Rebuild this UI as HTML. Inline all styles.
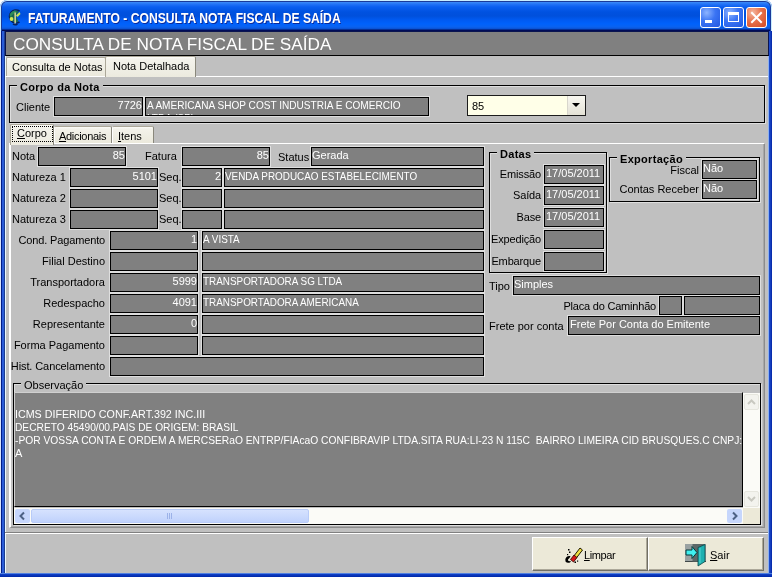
<!DOCTYPE html><html><head><meta charset="utf-8"><style>
*{margin:0;padding:0;box-sizing:border-box}
html,body{width:772px;height:577px;overflow:hidden;background:#fff}
body{position:relative;will-change:transform;font-family:"Liberation Sans",sans-serif;font-size:11px;color:#000}
.a{position:absolute}
.f{position:absolute;background:#808080;border:1px solid #000;height:19px;color:#fff;line-height:14px;padding:0 0 0 1px;white-space:nowrap;overflow:hidden;box-shadow:0 0 0 1px #dedede}
.r{text-align:right;padding:0 0 0 0}
.c span{display:inline-block;transform:scaleX(0.9);transform-origin:0 0}
.m span{display:block;transform-origin:0 0}
.l{position:absolute;white-space:nowrap;line-height:13px;letter-spacing:0}
.lr{text-align:right}
.gb{position:absolute;border:1px solid #000;box-shadow:1px 1px 0 #dedede,inset 1px 1px 0 #dedede}
.gl{position:absolute;background:#c0c0c0;padding:0 3px;font-weight:bold;line-height:13px;white-space:nowrap;letter-spacing:0.3px}
.tab{position:absolute;background:linear-gradient(#fdfdfb 0,#f3f2ea 2px,#ebe9dc 100%);border:1px solid #aca899;border-bottom:none;border-radius:2px 2px 0 0}
</style></head><body>
<div class="a" style="left:0px;top:0px;width:772px;height:577px;background:#0842d8;border-radius:7px 7px 0 0"></div>
<div class="a" style="left:0px;top:0px;width:772px;height:31px;border-radius:7px 7px 0 0;background:#c8ecff"></div>
<div class="a" style="left:1px;top:1px;width:770px;height:30px;border-radius:6px 6px 0 0;background:#1a3a9a"></div>
<div class="a" style="left:2px;top:2px;width:768px;height:29px;border-radius:5px 5px 0 0;background:linear-gradient(#3c8cf8 0,#2474f6 2px,#0a5ef0 5px,#0052e0 10px,#0050dc 14px,#005af2 18px,#0062fc 22px,#0a62f0 25px,#0a50d0 27px,#001060 28px,#000850 29px)"></div>
<div class="a" style="left:0px;top:31px;width:5px;height:546px;background:linear-gradient(90deg,#d8e4fc 0,#d8e4fc 1px,#001c88 1px,#001c88 2px,#2a5cd8 2px,#2a5cd8 4px,#1c3c90 4px)"></div>
<div class="a" style="left:768px;top:31px;width:4px;height:546px;background:linear-gradient(90deg,#8cb0f0 0,#8cb0f0 1px,#2050d0 1px,#1038b8 3px,#0020a0 4px)"></div>
<div class="a" style="left:0px;top:573px;width:772px;height:4px;background:linear-gradient(#5080e0 0,#5080e0 1px,#1040c8 1px,#0028a8 4px)"></div>
<div class="a" style="left:5px;top:31px;width:763px;height:542px;background:#c0c0c0"></div>
<div class="a" style="left:5px;top:56px;width:1px;height:517px;background:#e8f8ff"></div>
<div class="a" style="left:28px;top:10px;color:#fff;font-weight:bold;font-size:14px;line-height:16px;white-space:nowrap;text-shadow:1px 1px 0 #0a2a9c;transform:scaleX(0.867);transform-origin:0 0">FATURAMENTO - CONSULTA NOTA FISCAL DE SAÍDA</div>
<div class="a" style="left:700px;top:7px;width:21px;height:21px;border:1px solid #fff;border-radius:3px;background:radial-gradient(circle at 30% 25%,#8cb4ff 0,#3a74f4 45%,#2258e0 100%)"></div>
<div class="a" style="left:723px;top:7px;width:21px;height:21px;border:1px solid #fff;border-radius:3px;background:radial-gradient(circle at 30% 25%,#8cb4ff 0,#3a74f4 45%,#2258e0 100%)"></div>
<div class="a" style="left:746px;top:7px;width:21px;height:21px;border:1px solid #fff;border-radius:3px;background:radial-gradient(circle at 30% 25%,#f4b8a0 0,#e8704a 45%,#d04a24 100%)"></div>
<div class="a" style="left:705px;top:20px;width:7px;height:3px;background:#fff"></div>
<div class="a" style="left:728px;top:12px;width:11px;height:10px;border:1px solid #fff;border-top-width:3px"></div>
<svg class="a" style="left:746px;top:7px" width="21" height="21"><path d="M6 6 L15 15 M15 6 L6 15" stroke="#fff" stroke-width="2" stroke-linecap="square"/></svg>
<svg class="a" style="left:0px;top:0px" width="30" height="30" viewBox="0 0 30 30">
<path d="M19.5 11 A6.5 6.5 0 1 0 19.5 22" fill="none" stroke="#08205a" stroke-width="1.6"/>
<path d="M18.8 11.5 A5.8 5.8 0 1 0 18.5 21.5 L16 16 Z" fill="#1a6650"/>
<path d="M9.5 15 Q11 11 15 10.5 L17 12.5 Q12.5 13 11 17 Z" fill="#2e8c58"/>
<circle cx="11.5" cy="19" r="1.9" fill="#d0e858"/>
<path d="M16 15.5 L19.5 12 L20.5 14 L17.5 17 Z" fill="#c8e850"/>
<rect x="14.5" y="12.5" width="1.3" height="11" fill="#f4e8a8"/>
<path d="M13 24 Q15 25.5 17.5 24" stroke="#08205a" stroke-width="1.5" fill="none"/>
</svg>
<div class="a" style="left:5px;top:31px;width:764px;height:25px;background:#808080;border:1px solid #0a1450;border-bottom-color:#000"></div>
<div class="a" style="left:13px;top:34px;color:#fff;font-size:17.2px;line-height:20px;white-space:nowrap">CONSULTA DE NOTA FISCAL DE SAÍDA</div>
<div class="a" style="left:5px;top:76px;width:763px;height:1px;background:#fff"></div>
<div class="tab" style="left:6px;top:57px;width:100px;height:19px"></div>
<div class="l" style="left:12px;top:61px;">Consulta de Notas</div>
<div class="tab" style="left:105px;top:56px;width:91px;height:21px;background:linear-gradient(#fdfdfb 0,#f4f3ec 2px,#eceadf 100%);border-right-color:#8a887c"></div>
<div class="l" style="left:113px;top:60px;">Nota Detalhada</div>
<div class="gb" style="left:9px;top:85px;width:756px;height:38px"></div>
<div class="gl" style="left:17px;top:81px">Corpo da Nota</div>
<div class="l" style="left:16px;top:101px;">Cliente</div>
<div class="f r" style="left:54px;top:97px;width:89px;height:19px;">7726</div>
<div class="f m" style="left:145px;top:97px;width:284px;height:19px;line-height:12.5px;padding-top:1px"><span style="transform:scaleX(0.915)">A AMERICANA SHOP COST INDUSTRIA E COMERCIO</span><span style="transform:scaleX(0.915)">LTDA (SP)</span></div>
<div class="a" style="left:467px;top:95px;width:119px;height:21px;background:#ffffe8;border:1px solid #1c1c1c"></div>
<div class="l" style="left:472px;top:98px;line-height:16px">85</div>
<div class="a" style="left:567px;top:96px;width:18px;height:19px;background:linear-gradient(#f8f7f0,#e4e2d6);border-left:1px solid #d8d6cc"></div>
<svg class="a" style="left:571px;top:102px" width="10" height="6"><path d="M1 1 L9 1 L5 5 Z" fill="#000"/></svg>
<div class="a" style="left:9px;top:143px;width:756px;height:385px;border-left:2px solid #fff;border-top:1px solid #fff;border-right:1px solid #8c8c8c;border-bottom:1px solid #8c8c8c;box-shadow:inset -1px -1px 0 #a8a8a8"></div>
<div class="tab" style="left:10px;top:124px;width:44px;height:21px;background:linear-gradient(#fdfdfb 0,#f4f3ec 2px,#eceadf 100%);border-right-color:#8a887c"></div>
<div class="a" style="left:12px;top:126px;width:41px;height:16px;border:1px dotted #000"></div>
<div class="l" style="left:17px;top:127px;"><u>C</u>orpo</div>
<div class="tab" style="left:54px;top:126px;width:58px;height:17px;border-right-color:#8a887c;border-left-color:#fff"></div>
<div class="l" style="left:59px;top:130px;letter-spacing:-0.3px"><u>A</u>dicionais</div>
<div class="tab" style="left:112px;top:126px;width:42px;height:17px;border-right-color:#8a887c;border-left-color:#fff"></div>
<div class="l" style="left:118px;top:130px;"><u>I</u>tens</div>
<div class="l" style="left:12px;top:150px;">Nota</div>
<div class="f r" style="left:38px;top:147px;width:88px;height:19px;">85</div>
<div class="l" style="left:145px;top:150px;">Fatura</div>
<div class="f r" style="left:182px;top:147px;width:88px;height:19px;">85</div>
<div class="l" style="left:278px;top:151px;">Status</div>
<div class="f" style="left:311px;top:147px;width:173px;height:19px;padding-left:0">Gerada</div>
<div class="l" style="left:12px;top:171px;">Natureza 1</div>
<div class="f r" style="left:70px;top:168px;width:88px;height:19px;">5101</div>
<div class="l" style="left:159px;top:171px;">Seq.</div>
<div class="f r" style="left:182px;top:168px;width:40px;height:19px;">2</div>
<div class="f c" style="left:224px;top:168px;width:260px;height:19px;padding-left:0"><span>VENDA PRODUCAO ESTABELECIMENTO</span></div>
<div class="l" style="left:12px;top:192px;">Natureza 2</div>
<div class="f r" style="left:70px;top:189px;width:88px;height:19px;"></div>
<div class="l" style="left:159px;top:192px;">Seq.</div>
<div class="f r" style="left:182px;top:189px;width:40px;height:19px;"></div>
<div class="f c" style="left:224px;top:189px;width:260px;height:19px;padding-left:0"></div>
<div class="l" style="left:12px;top:213px;">Natureza 3</div>
<div class="f r" style="left:70px;top:210px;width:88px;height:19px;"></div>
<div class="l" style="left:159px;top:213px;">Seq.</div>
<div class="f r" style="left:182px;top:210px;width:40px;height:19px;"></div>
<div class="f c" style="left:224px;top:210px;width:260px;height:19px;padding-left:0"></div>
<div class="l lr" style="left:-95px;width:200px;top:234px;letter-spacing:-0.15px">Cond. Pagamento</div>
<div class="f r" style="left:110px;top:231px;width:88px;height:19px;">1</div>
<div class="f c" style="left:202px;top:231px;width:282px;height:19px;padding-left:0"><span>A VISTA</span></div>
<div class="l lr" style="left:-95px;width:200px;top:255px;">Filial Destino</div>
<div class="f r" style="left:110px;top:252px;width:88px;height:19px;"></div>
<div class="f c" style="left:202px;top:252px;width:282px;height:19px;padding-left:0"></div>
<div class="l lr" style="left:-95px;width:200px;top:276px;">Transportadora</div>
<div class="f r" style="left:110px;top:273px;width:88px;height:19px;">5999</div>
<div class="f c" style="left:202px;top:273px;width:282px;height:19px;padding-left:0"><span>TRANSPORTADORA SG LTDA</span></div>
<div class="l lr" style="left:-95px;width:200px;top:297px;">Redespacho</div>
<div class="f r" style="left:110px;top:294px;width:88px;height:19px;">4091</div>
<div class="f c" style="left:202px;top:294px;width:282px;height:19px;padding-left:0"><span>TRANSPORTADORA AMERICANA</span></div>
<div class="l lr" style="left:-95px;width:200px;top:318px;">Representante</div>
<div class="f r" style="left:110px;top:315px;width:88px;height:19px;">0</div>
<div class="f c" style="left:202px;top:315px;width:282px;height:19px;padding-left:0"></div>
<div class="l lr" style="left:-95px;width:200px;top:339px;">Forma Pagamento</div>
<div class="f r" style="left:110px;top:336px;width:88px;height:19px;"></div>
<div class="f c" style="left:202px;top:336px;width:282px;height:19px;padding-left:0"></div>
<div class="l lr" style="left:-95px;width:200px;top:360px;letter-spacing:-0.1px">Hist. Cancelamento</div>
<div class="f" style="left:110px;top:357px;width:374px;height:19px;"></div>
<div class="gb" style="left:489px;top:152px;width:118px;height:121px"></div>
<div class="gl" style="left:497px;top:148px">Datas</div>
<div class="l lr" style="left:341px;width:200px;top:168px;letter-spacing:-0.15px">Emissão</div>
<div class="f" style="left:544px;top:165px;width:60px;height:19px;">17/05/2011</div>
<div class="l lr" style="left:341px;width:200px;top:189px;letter-spacing:-0.15px">Saída</div>
<div class="f" style="left:544px;top:186px;width:60px;height:19px;">17/05/2011</div>
<div class="l lr" style="left:341px;width:200px;top:211px;letter-spacing:-0.15px">Base</div>
<div class="f" style="left:544px;top:208px;width:60px;height:19px;">17/05/2011</div>
<div class="l lr" style="left:341px;width:200px;top:233px;letter-spacing:-0.15px">Expedição</div>
<div class="f" style="left:544px;top:230px;width:60px;height:19px;"></div>
<div class="l lr" style="left:341px;width:200px;top:255px;letter-spacing:-0.15px">Embarque</div>
<div class="f" style="left:544px;top:252px;width:60px;height:19px;"></div>
<div class="gb" style="left:609px;top:157px;width:151px;height:45px"></div>
<div class="gl" style="left:617px;top:153px">Exportação</div>
<div class="l lr" style="left:499px;width:200px;top:164px;">Fiscal</div>
<div class="f" style="left:702px;top:160px;width:55px;height:19px;padding-left:0">Não</div>
<div class="l lr" style="left:499px;width:200px;top:183px;">Contas Receber</div>
<div class="f" style="left:702px;top:180px;width:55px;height:19px;padding-left:0">Não</div>
<div class="l" style="left:489px;top:280px;">Tipo</div>
<div class="f" style="left:513px;top:276px;width:247px;height:19px;padding-left:0">Simples</div>
<div class="l lr" style="left:456px;width:200px;top:300px;letter-spacing:-0.2px">Placa do Caminhão</div>
<div class="f" style="left:659px;top:296px;width:23px;height:19px;"></div>
<div class="f" style="left:684px;top:296px;width:76px;height:19px;"></div>
<div class="l" style="left:489px;top:320px;">Frete por conta</div>
<div class="f" style="left:568px;top:316px;width:192px;height:19px;">Frete Por Conta do Emitente</div>
<div class="gb" style="left:13px;top:383px;width:748px;height:142px"></div>
<div class="gl" style="left:21px;top:379px;font-weight:normal;letter-spacing:0">Observação</div>
<div class="a" style="left:14px;top:392px;width:729px;height:115px;background:#808080;border-left:1px solid #d0d0d0;border-top:1px solid #d0d0d0;border-right:1px solid #000;border-bottom:1px solid #000"></div>
<div class="a m" style="left:15px;top:408px;width:727px;height:98px;overflow:hidden;color:#fff;white-space:nowrap;line-height:13px"><span style="transform:scaleX(0.973)">ICMS DIFERIDO CONF.ART.392 INC.III</span><span style="transform:scaleX(0.927)">DECRETO 45490/00.PAIS DE ORIGEM: BRASIL</span><span style="transform:scaleX(0.933)">-POR VOSSA CONTA E ORDEM A MERCSERaO ENTRP/FIAcaO CONFIBRAVIP LTDA.SITA RUA:LI-23 N 115C&nbsp; BAIRRO LIMEIRA CID BRUSQUES.C CNPJ:0</span><span>A</span></div>
<div class="a" style="left:743px;top:393px;width:17px;height:115px;background:#fbfbf7"></div>
<div class="a" style="left:744px;top:394px;width:15px;height:16px;background:#f3f3ee;border:1px solid #e6e6de;border-radius:2px"></div>
<div class="a" style="left:744px;top:491px;width:15px;height:16px;background:#f3f3ee;border:1px solid #e6e6de;border-radius:2px"></div>
<svg class="a" style="left:747px;top:398px" width="9" height="8"><path d="M1 6 L4.5 2.5 L8 6" stroke="#c8c8c0" stroke-width="2" fill="none"/></svg>
<svg class="a" style="left:747px;top:495px" width="9" height="8"><path d="M1 2 L4.5 5.5 L8 2" stroke="#c8c8c0" stroke-width="2" fill="none"/></svg>
<div class="a" style="left:14px;top:508px;width:729px;height:16px;background:#fbfbf7"></div>
<div class="a" style="left:15px;top:509px;width:15px;height:14px;background:#c6d6fc;border-radius:2px"></div>
<svg class="a" style="left:18px;top:511px" width="9" height="10"><path d="M6 1.5 L2.5 5 L6 8.5" stroke="#4d6185" stroke-width="2" fill="none"/></svg>
<div class="a" style="left:31px;top:509px;width:278px;height:14px;background:linear-gradient(#d6e2fe,#c0d2fc);border:1px solid #b8cbf8;border-radius:2px"></div>
<svg class="a" style="left:166px;top:512px" width="8" height="8"><path d="M1.5 1 V7 M3.5 1 V7 M5.5 1 V7" stroke="#9cb2e8" stroke-width="1"/></svg>
<div class="a" style="left:727px;top:509px;width:15px;height:14px;background:#c6d6fc;border-radius:2px"></div>
<svg class="a" style="left:730px;top:511px" width="9" height="10"><path d="M3 1.5 L6.5 5 L3 8.5" stroke="#4d6185" stroke-width="2" fill="none"/></svg>
<div class="a" style="left:743px;top:508px;width:17px;height:16px;background:#ece9d8"></div>
<div class="a" style="left:5px;top:532px;width:763px;height:1px;background:#808080"></div>
<div class="a" style="left:5px;top:533px;width:763px;height:1px;background:#fff"></div>
<div class="a" style="left:532px;top:537px;width:116px;height:34px;background:#ece9d8;border:1px solid #fff;border-right-color:#716f64;border-bottom-color:#716f64;box-shadow:inset -1px -1px 0 #aca899"></div>
<div class="a" style="left:648px;top:537px;width:116px;height:34px;background:#ece9d8;border:1px solid #fff;border-right-color:#716f64;border-bottom-color:#716f64;box-shadow:inset -1px -1px 0 #aca899"></div>
<div class="l" style="left:584px;top:549px;letter-spacing:-0.4px"><u>L</u>impar</div>
<div class="l" style="left:710px;top:549px;"><u>S</u>air</div>
<svg class="a" style="left:564px;top:545px" width="20" height="20" viewBox="0 0 20 20">
<path d="M9.5 11.5 L16 3 L18.5 5 L12 13.5 Z" fill="#f0e040" stroke="#201800" stroke-width="1"/>
<path d="M6.5 14.5 L10 10 L13 12.5 L9.5 17 Z" fill="#d81818" stroke="#300000" stroke-width="0.8"/>
<path d="M2.5 12 Q0.5 14 1.5 16.5 Q3 18.5 6 17.5 L7 16 Q5 16.5 4 15.5 Q3.5 14 5.5 13 L6.5 11 Q4 10.5 2.5 12 Z" fill="#000"/>
<rect x="4" y="4" width="1.5" height="1.5" fill="#000"/><rect x="5" y="6.5" width="1.5" height="1.5" fill="#000"/><rect x="3" y="9" width="1.2" height="1.2" fill="#000"/>
<rect x="10.5" y="16.5" width="1.5" height="1.5" fill="#000"/><rect x="13" y="15.5" width="1.2" height="1.2" fill="#000"/>
</svg>
<svg class="a" style="left:684px;top:543px" width="24" height="24" viewBox="0 0 24 24">
<rect x="1" y="1" width="21" height="17.5" fill="#9aa2a2"/>
<rect x="1" y="18" width="21" height="1" fill="#404848"/>
<rect x="8.5" y="1" width="12" height="17.5" fill="#5c6868"/>
<path d="M14 4.5 L21 1.5 L21 18.5 L14 23 Z" fill="#1fb0b0" stroke="#0a4848" stroke-width="0.8"/>
<path d="M16 5 L16 20" stroke="#60e0e0" stroke-width="0.8"/>
<path d="M2 7 H8 V3.5 L13 9.5 L8 15.5 V12 H2 Z" fill="#40f0f0" stroke="#083838" stroke-width="1"/>
</svg>
</body></html>
